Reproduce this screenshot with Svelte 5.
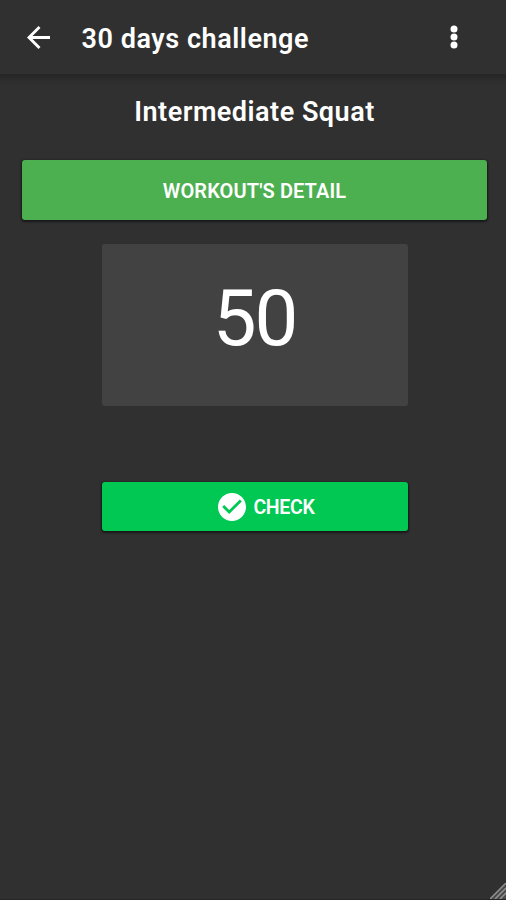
<script>
  let { title = '30 days challenge', workout = 'Intermediate Squat', reps = 50 } = $props();
</script>

<div class="app">
  <header class="toolbar">
    <button class="icon-btn" aria-label="Back">
      <svg class="back" viewBox="4 4 16 16">
        <path d="M20 11H7.83l5.59-5.59L12 4l-8 8 8 8 1.41-1.41L7.83 13H20v-2z" />
      </svg>
    </button>
    <h1>{title}</h1>
    <button class="icon-btn menu" aria-label="More">
      <svg class="dots" viewBox="0 0 8 24">
        <circle cx="4" cy="4" r="3.5" />
        <circle cx="4" cy="12" r="3.5" />
        <circle cx="4" cy="20" r="3.5" />
      </svg>
    </button>
  </header>

  <main>
    <h2>{workout}</h2>
    <button class="btn detail"><span>Workout's detail</span></button>
    <div class="card">
      <span class="reps">{reps}</span>
    </div>
    <button class="btn check">
      <svg class="tick" viewBox="2 2 20 20">
        <path d="M12 2C6.48 2 2 6.48 2 12s4.48 10 10 10 10-4.48 10-10S17.52 2 12 2zm-2 15l-5-5 1.41-1.41L10 14.17l7.59-7.59L19 8l-9 9z" />
      </svg>
      <span>Check</span>
    </button>
  </main>

  <footer>
    <svg class="grip" viewBox="0 0 16 16">
      <path d="M0 16L16 0V16Z" fill="#4a4a4a" />
      <path d="M0 16L16 0M5 16L16 5M10 16L16 10" stroke="#929292" stroke-width="1.5" />
    </svg>
  </footer>
</div>

<style>
  :global(body) {
    background: #303030;
  }
  .app {
    display: flex;
    flex-direction: column;
    box-sizing: border-box;
    height: 900px;
    overflow: hidden;
    background: #303030;
    border-bottom: 1px solid #292429;
    color: #fff;
    font-family: Roboto, sans-serif;
  }
  button {
    border: 0;
    padding: 0;
    color: inherit;
    font-family: inherit;
  }
  svg {
    display: block;
    fill: #fff;
  }
  .toolbar {
    display: flex;
    align-items: center;
    box-sizing: border-box;
    height: 74px;
    padding: 3px 47px 0 27px;
    box-shadow: 0 3px 4px 2px #272727;
  }
  .icon-btn {
    display: flex;
    background: none;
  }
  .back {
    width: 23px;
    height: 23px;
    margin-top: -3px;
  }
  .dots {
    width: 8px;
    height: 24px;
    margin-top: -3px;
  }
  .menu {
    margin-left: auto;
    margin-right: 1px;
  }
  h1,
  h2 {
    margin: 0;
    font-weight: 600;
    white-space: nowrap;
  }
  h1 {
    margin-left: 31.5px;
    font-size: 27px;
    line-height: 36px;
    letter-spacing: 0.55px;
  }
  main {
    display: flex;
    flex-direction: column;
    align-items: center;
    flex: 1;
    padding: 20px 19px 0 22px;
  }
  h2 {
    height: 36px;
    font-size: 27px;
    line-height: 36px;
    letter-spacing: 0.5px;
  }
  .btn {
    display: flex;
    align-items: center;
    justify-content: center;
    border-radius: 3px;
    font-weight: 600;
    text-transform: uppercase;
    box-shadow: 0 1px 2px 1px #19191c;
  }
  .detail {
    width: 100%;
    height: 60px;
    margin-top: 30px;
    padding-top: 2px;
    background: #4caf50;
    font-size: 20px;
    letter-spacing: 0.1px;
  }
  .card {
    display: flex;
    justify-content: center;
    box-sizing: border-box;
    width: 306px;
    height: 162px;
    margin-top: 24px;
    padding-top: 29px;
    border-radius: 3px;
    background: #424242;
  }
  .reps {
    font-size: 78px;
    line-height: 92px;
    letter-spacing: -2px;
  }
  .check {
    gap: 7px;
    width: 306px;
    height: 49px;
    margin-top: 76px;
    padding-left: 24px;
    background: #00c853;
    font-size: 19.5px;
    letter-spacing: -0.3px;
  }
  .check span {
    padding-top: 1px;
  }
  .tick {
    width: 28px;
    height: 28px;
  }
  footer {
    display: flex;
    justify-content: flex-end;
  }
  .grip {
    width: 16px;
    height: 16px;
  }
</style>
